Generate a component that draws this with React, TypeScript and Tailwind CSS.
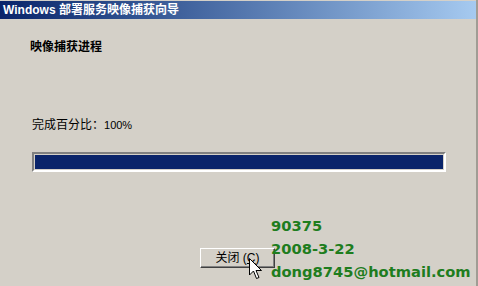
import React from 'react';

const App = () => {
  return (
    <div className="relative h-[286px] w-[478px] overflow-hidden bg-[#d4d0c8] font-['Liberation_Sans','Noto_Sans_CJK_SC',sans-serif] text-[12px] text-black">
      <div className="flex h-full flex-col border-r-2 border-[#a09c94]">
        {/* title bar */}
        <div className="mt-[1px] flex h-[18px] items-center bg-gradient-to-r from-[#0a246a] to-[#a6caf0] pl-[3px] text-[12px] font-bold leading-none text-white">
          Windows 部署服务映像捕获向导
        </div>

        {/* body */}
        <div className="flex flex-1 flex-col pl-[30px]">
          <div className="mt-[21px] text-[12px] font-bold leading-[14px]">映像捕获进程</div>
          <div className="mt-[64px] pl-[2px] leading-[14px]">
            完成百分比：<span className="text-[11px]">100%</span>
          </div>
          <div className="ml-[2px] mt-[20px] h-[20px] w-[414px] border-2 border-b-white border-l-[#808080] border-r-white border-t-[#808080] p-[1px]">
            <div className="h-full w-full bg-[#0a246a]" />
          </div>
          <div className="ml-[170px] mt-[76px] flex h-[20px] w-[75px] items-center justify-center border border-b-[#404040] border-l-white border-r-[#404040] border-t-white shadow-[inset_-1px_-1px_0_#808080] leading-none">
            关闭 (<span className="underline">C</span>)
          </div>
        </div>
      </div>

      {/* overlay text */}
      <div className="absolute left-[271px] top-[214px] font-['DejaVu_Sans',sans-serif] text-[14.7px] font-bold leading-[23px] text-[#1e7d1e]">
        <div>90375</div>
        <div>2008-3-22</div>
        <div>dong8745@hotmail.com</div>
      </div>

      {/* mouse cursor */}
      <svg className="absolute left-[249px] top-[258px]" width="14" height="24" viewBox="0 0 14 24">
        <path d="M0.5 0.5 L0.5 17 L4.5 13 L7.5 20.5 L10 19.5 L7 12.5 L12.5 12.5 Z" fill="white" stroke="black" strokeWidth="1" />
      </svg>
    </div>
  );
};

export default App;
